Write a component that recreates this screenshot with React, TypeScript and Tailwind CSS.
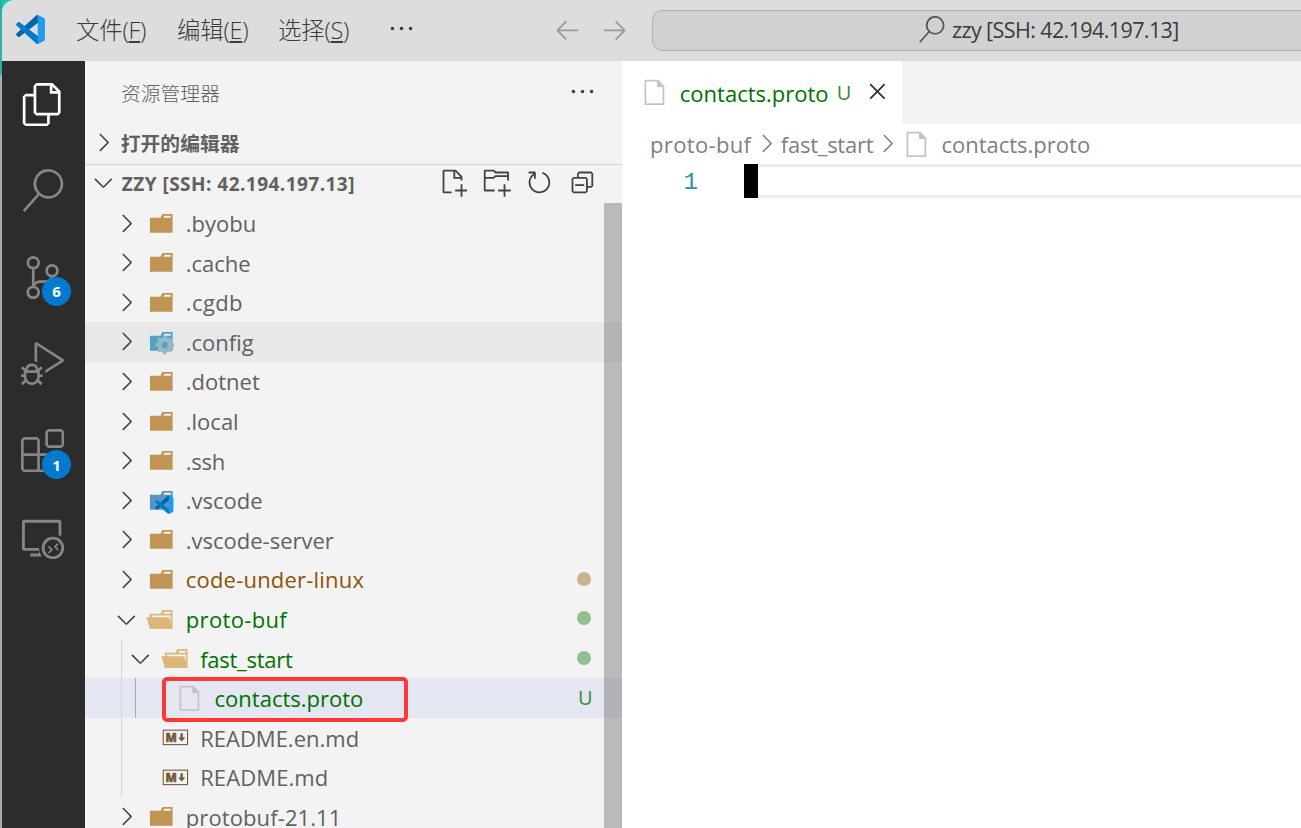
import React from 'react';
import {
  VscFiles, VscSearch, VscSourceControl, VscDebugAlt, VscExtensions, VscRemoteExplorer,
  VscArrowLeft, VscArrowRight, VscEllipsis, VscChevronRight, VscChevronDown,
  VscNewFile, VscNewFolder, VscRefresh, VscCollapseAll, VscClose
} from 'react-icons/vsc';

type IconKind = 'folder' | 'config' | 'vscode' | 'open' | 'file' | 'markdown';

interface TreeItem {
  name: string;
  icon: IconKind;
  level: number;
  state?: 'closed' | 'open';
  color?: string;
  tracking?: string;
  dot?: string;
  badge?: string;
  bg?: string;
}

const items: TreeItem[] = [
  { name: '.byobu', icon: 'folder', level: 0, state: 'closed' },
  { name: '.cache', icon: 'folder', level: 0, state: 'closed' },
  { name: '.cgdb', icon: 'folder', level: 0, state: 'closed', tracking: 'tracking-[0.4px]' },
  { name: '.config', icon: 'config', level: 0, state: 'closed', bg: 'bg-[#e8e8e8]' },
  { name: '.dotnet', icon: 'folder', level: 0, state: 'closed' },
  { name: '.local', icon: 'folder', level: 0, state: 'closed' },
  { name: '.ssh', icon: 'folder', level: 0, state: 'closed', tracking: 'tracking-[-0.3px]' },
  { name: '.vscode', icon: 'vscode', level: 0, state: 'closed' },
  { name: '.vscode-server', icon: 'folder', level: 0, state: 'closed' },
  { name: 'code-under-linux', icon: 'folder', level: 0, state: 'closed', color: 'text-[#895503]', tracking: 'tracking-[0.2px]', dot: 'bg-[#cab391]' },
  { name: 'proto-buf', icon: 'open', level: 0, state: 'open', color: 'text-[#007100]', tracking: 'tracking-[0.35px]', dot: 'bg-[#90c090]' },
  { name: 'fast_start', icon: 'open', level: 1, state: 'open', color: 'text-[#007100]', tracking: 'tracking-[-0.25px]', dot: 'bg-[#90c090]' },
  { name: 'contacts.proto', icon: 'file', level: 2, color: 'text-[#007100]', badge: 'U', bg: 'bg-[#e4e6f1]' },
  { name: 'README.en.md', icon: 'markdown', level: 1 },
  { name: 'README.md', icon: 'markdown', level: 1, tracking: 'tracking-[0.1px]' },
  { name: 'protobuf-21.11', icon: 'folder', level: 0, state: 'closed', tracking: 'tracking-[0.1px]' },
];

const CodeLogo = () => (
  <>
    <path fill="#0065a9" d="M29.01,5.03,23.244,2.254a1.742,1.742,0,0,0-1.989.338L2.38,19.8A1.166,1.166,0,0,0,2.3,21.447c.025.027.05.053.077.077l1.541,1.4a1.165,1.165,0,0,0,1.489.066L28.142,5.75A1.158,1.158,0,0,1,30,6.672V6.605A1.748,1.748,0,0,0,29.01,5.03Z" />
    <path fill="#007acc" d="M29.01,26.97l-5.766,2.777a1.745,1.745,0,0,1-1.989-.338L2.38,12.2A1.166,1.166,0,0,1,2.3,10.553c.025-.027.05-.053.077-.077l1.541-1.4A1.165,1.165,0,0,1,5.41,9.01L28.142,26.25A1.158,1.158,0,0,0,30,25.328V25.4A1.749,1.749,0,0,1,29.01,26.97Z" />
    <path fill="#1f9cf0" d="M23.244,29.747a1.745,1.745,0,0,1-1.989-.338A1.025,1.025,0,0,0,23,28.684V3.316a1.024,1.024,0,0,0-1.749-.724,1.744,1.744,0,0,1,1.989-.339l5.765,2.772A1.748,1.748,0,0,1,30,6.6V25.4a1.748,1.748,0,0,1-.991,1.576Z" />
  </>
);

const FOLDER = 'M27.5,5.5H18.2L16.1,9.7H4.4V26.5H29.6V5.5Zm0,4.2H19.3l1-2.1h7.2Z';

const FileIcon = ({ kind }: { kind: IconKind }) => (
  <svg viewBox="0 0 32 32" className="size-[28.8px] shrink-0 overflow-visible">
    {kind === 'folder' && <path fill="#c09553" d={FOLDER} />}
    {kind === 'config' && (
      <>
        <path fill="#53a3c6" d={FOLDER} />
        <circle cx="20.8" cy="20" r="6" fill="none" stroke="#99b8c4" strokeWidth="5" />
        <circle cx="20.8" cy="20" r="8.9" fill="none" stroke="#99b8c4" strokeWidth="2.8" strokeDasharray="3.5 3.49" strokeDashoffset="1.75" />
      </>
    )}
    {kind === 'vscode' && (
      <>
        <path fill="#5495c4" d={FOLDER} />
        <g transform="translate(8.6 9.2) scale(.73)"><CodeLogo /></g>
      </>
    )}
    {kind === 'open' && (
      <>
        <path fill="#dcb67a" d="M27.4,5.5H18.2L16.1,9.7H4.3V26.5H29.5V5.5Zm0,18.7H6.6V11.8H27.4Zm0-14.5H19.2l1-2.1h7.1V9.7Z" />
        <path fill="#dcb67a" d="M25.7,13.7H.5L4.3,26.5H29.5Z" />
      </>
    )}
    {kind === 'file' && <path fill="#c5c5c5" d="M20.414,2H5V30H27V8.586ZM7,28V4H19v6h6V28Z" />}
    {kind === 'markdown' && (
      <>
        <rect x="2.5" y="7.955" width="27" height="16.091" fill="none" stroke="#755838" strokeWidth="1.2" />
        <text x="5" y="20.6" fontSize="12.8" fontWeight="800" textLength="12.6" lengthAdjust="spacingAndGlyphs" fill="#755838" stroke="#755838" strokeWidth=".5">M</text>
        <path fill="#755838" d="M22.955,20.636,18.864,16.136H21.591V11.364H24.318V16.136H27.045Z" />
      </>
    )}
  </svg>
);

const Row = ({ item }: { item: TreeItem }) => (
  <div className={`flex h-[39.6px] items-center ${item.bg ?? ''}`}>
    <div className="flex h-full shrink-0" style={{ width: 27 + item.level * 14.4 }}>
      {item.level > 0 && <span className="w-9 shrink-0" />}
      {Array.from({ length: item.level }, (_, i) => (
        <span key={i} className={`h-full w-[14.4px] shrink-0 border-l ${i === 1 ? 'border-[#a9a9a9]' : 'border-[#d4d4d4]'}`} />
      ))}
    </div>
    <span className="mr-[5.6px] flex size-[28.8px] shrink-0 items-center justify-center text-[#424242]">
      {item.state === 'closed' && <VscChevronRight size={28.8} />}
      {item.state === 'open' && <VscChevronDown size={28.8} />}
    </span>
    <FileIcon kind={item.icon} />
    <span className={`ml-[10.6px] text-[22px] leading-none whitespace-nowrap ${item.tracking ?? ''} ${item.color ?? 'text-[#616161]'}`}>{item.name}</span>
    {item.dot && <span className={`mr-[31.5px] mb-px ml-auto size-3.5 rounded-full ${item.dot}`} />}
    {item.badge && <span className="mr-[29.5px] ml-auto text-[20px] font-medium text-[#388a34]">{item.badge}</span>}
  </div>
);

const Badge = ({ children }: { children: React.ReactNode }) => (
  <span className="absolute top-[43px] left-[40px] flex size-[29px] items-center justify-center rounded-full bg-[#007acc] text-[15px] font-bold text-white">
    {children}
  </span>
);

const activities = [
  { Icon: VscFiles, active: true },
  { Icon: VscSearch },
  { Icon: VscSourceControl, badge: '6' },
  { Icon: VscDebugAlt },
  { Icon: VscExtensions, badge: '1' },
  { Icon: VscRemoteExplorer },
];

const TitleBar = () => (
  <header className="flex h-[61px] shrink-0 items-center rounded-tl-xl bg-[#dddddd] text-[#3b3b3b]">
    <svg viewBox="0 0 32 32" className="mb-0.5 ml-3 size-[33px] shrink-0"><CodeLogo /></svg>
    <nav className="ml-[29px] flex w-[340px] shrink-0 items-center pt-px text-[23.4px] font-light whitespace-nowrap">
      <span className="w-[101px] tracking-[-0.2px]">文件(<u className="underline-offset-2">F</u>)</span>
      <span className="w-[101px] tracking-[-0.2px]">编辑(<u className="underline-offset-2">E</u>)</span>
      <span className="w-[109px] tracking-[-0.2px]">选择(<u className="underline-offset-2">S</u>)</span>
      <VscEllipsis size={29} className="mb-1 shrink-0" />
    </nav>
    <div className="mb-[3px] ml-[137px] flex shrink-0 gap-[18px] text-[#9b9b9b]">
      <VscArrowLeft size={29} />
      <VscArrowRight size={29} />
    </div>
    <div className="-mr-3 mb-px ml-[23px] flex h-[41px] flex-1 items-center rounded-[10px] border border-[#b2b2b2] bg-[#d1d1d1] pl-[265px]">
      <VscSearch size={27} className="mb-0.5 shrink-0 text-[#555555]" />
      <span className="ml-[7px] pt-px text-[21.5px] tracking-[-0.6px] whitespace-nowrap">zzy [SSH: 42.194.197.13]</span>
    </div>
  </header>
);

const Sidebar = () => (
  <aside className="relative flex w-[537px] shrink-0 flex-col bg-[#f3f3f3] text-[#616161]">
    <div className="flex h-[63px] shrink-0 items-center pr-[25px] pl-9">
      <h2 className="pt-0.5 text-[19.8px] font-light">资源管理器</h2>
      <VscEllipsis size={29} className="mb-0.5 ml-auto text-[#424242]" />
    </div>
    <div className="flex h-[39.6px] shrink-0 items-center pl-1">
      <VscChevronRight size={28.8} className="mb-0.5 text-[#424242]" />
      <h3 className="ml-[3px] text-[19.8px] font-bold">打开的编辑器</h3>
    </div>
    <div className="flex h-[39.6px] shrink-0 items-center border-t border-[#d4d4d4] pr-[25px] pl-1">
      <VscChevronDown size={28.8} className="mb-0.5 text-[#424242]" />
      <h3 className="ml-1 text-[19px] font-bold tracking-[0.46px] whitespace-nowrap">ZZY [SSH: 42.194.197.13]</h3>
      <div className="mb-0.5 ml-auto flex gap-[14.4px] text-[#424242]">
        <VscNewFile size={28.8} />
        <VscNewFolder size={28.8} />
        <VscRefresh size={28.8} />
        <VscCollapseAll size={28.8} />
      </div>
    </div>
    <div className="min-h-0 flex-1 overflow-hidden">
      {items.map(item => <Row key={item.name} item={item} />)}
    </div>
    {/* Scrollbar */}
    <div className="absolute top-[142px] right-0 bottom-0 w-[18px] bg-[#646464]/40" />
    {/* Highlight frame */}
    <div className="absolute top-[616px] left-[77px] h-[45px] w-[246px] rounded-[5px] border-4 border-[#ff3737]" />
  </aside>
);

const Editor = () => (
  <main className="flex min-w-0 flex-1 flex-col bg-white">
    <div className="flex h-[63px] shrink-0 bg-[#f3f3f3]">
      <div className="flex w-[280px] items-center bg-white pl-[18px]">
        <FileIcon kind="file" />
        <span className="ml-[11px] w-[148px] pt-0.5 text-[22px] whitespace-nowrap text-[#007100]">contacts.proto</span>
        <span className="ml-[9px] w-[20px] pt-px text-[20px] font-medium text-[#388a34]">U</span>
        <VscClose size={28.8} className="mb-0.5 ml-1.5 shrink-0 text-[#333333]" />
      </div>
    </div>
    <div className="flex h-[40px] shrink-0 items-center pl-7 text-[22px] whitespace-nowrap text-[#808080]">
      <span className="w-[102px] tracking-[0.35px]">proto-buf</span>
      <VscChevronRight size={28.8} className="mb-0.5 shrink-0" />
      <span className="w-[92px] tracking-[-0.25px]">fast_start</span>
      <VscChevronRight size={28.8} className="mb-0.5 shrink-0" />
      <FileIcon kind="file" />
      <span className="ml-[11px]">contacts.proto</span>
    </div>
    <div className="flex h-[34px] shrink-0">
      <span className="w-[122px] pt-0.5 pr-[46px] text-right font-['Liberation_Mono',monospace] text-[24px] leading-[34px] text-[#2b91af]">1</span>
      <span className="h-full w-3.5 bg-black" />
      <span className="h-full flex-1 border-y-[3px] border-[#eeeeee]" />
    </div>
  </main>
);

const App = () => (
  <div className="flex h-[828px] w-[1301px] overflow-hidden bg-[#14c8b4] font-['Open_Sans','Noto_Sans_CJK_SC',sans-serif]">
    <div className="w-0.5 shrink-0 bg-gradient-to-b from-[#30b0a4] from-9% to-[#a9adad] to-9%" />
    <div className="flex min-w-0 flex-1 flex-col">
      <TitleBar />
      <div className="flex min-h-0 flex-1">
        <nav className="flex w-[83px] shrink-0 flex-col bg-[#2c2c2c]">
          {activities.map(({ Icon, active, badge }, i) => (
            <div key={i} className={`relative flex h-[86.6px] shrink-0 items-center pl-[18.5px] ${active ? 'text-white' : 'text-[#868686]'}`}>
              <Icon size={43.2} />
              {badge && <Badge>{badge}</Badge>}
            </div>
          ))}
        </nav>
        <Sidebar />
        <Editor />
      </div>
    </div>
  </div>
);

export default App;
